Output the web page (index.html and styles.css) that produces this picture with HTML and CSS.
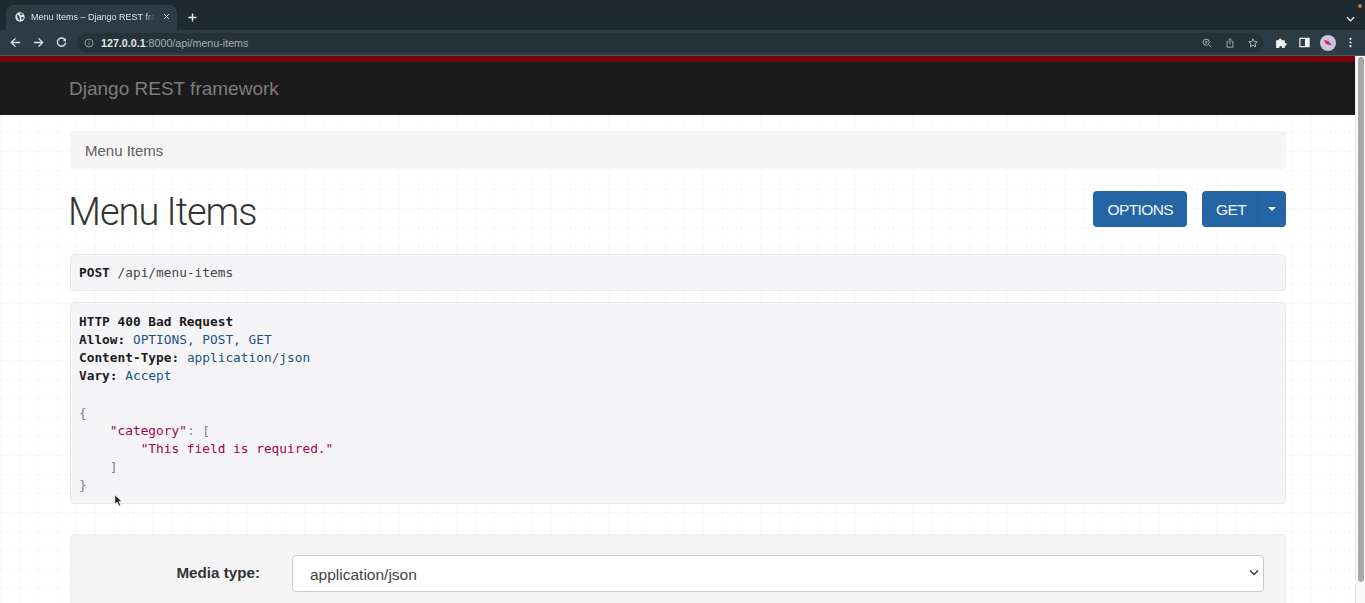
FILE: index.html
```html
<!DOCTYPE html>
<html lang="en">
<head>
<meta charset="utf-8">
<title>Menu Items – Django REST framework</title>
<link rel="stylesheet" href="styles.css">
</head>
<body>
<div class="chrome">
  <div class="tabstrip">
    <div class="tab">
      <svg class="favicon" viewBox="0 0 16 16"><circle cx="8" cy="8" r="7.500" fill="#e8eaed"/><path d="M3 4.500l3 .5 1.500 2-1 1.500 1.500 2v3L5 11 3.500 8zM9 1.500l3.500 1.500-1.500 2H9L8 3.500zM10 8h3.500l.5 1.500-2.500 3L10 11z" fill="#2f3e47"/></svg>
      <span class="tab-title">Menu Items – Django REST fra</span>
      <svg class="tab-close" viewBox="0 0 10 10"><path d="M1.500 1.500l7 7M8.500 1.500l-7 7" stroke="#dfe3e6" stroke-width="1.300"/></svg>
    </div>
    <svg class="newtab" viewBox="0 0 10 10"><path d="M5 .5v9M.5 5h9" stroke="#eef0f1" stroke-width="1.500"/></svg>
    <div class="strip-end">
      <svg class="chev" viewBox="0 0 10 6"><path d="M1 1l4 4 4-4" fill="none" stroke="#e8eaed" stroke-width="1.400"/></svg>
      <span class="notify-dot"></span>
    </div>
  </div>
  <div class="toolbar">
    <svg class="nav-icon" viewBox="0 0 12 12"><path d="M11 6H2M6 1.500L1.500 6 6 10.500" fill="none" stroke="#dfe3e6" stroke-width="1.500"/></svg>
    <svg class="nav-icon" viewBox="0 0 12 12"><path d="M1 6h9M6 1.500L10.500 6 6 10.500" fill="none" stroke="#dfe3e6" stroke-width="1.500"/></svg>
    <svg class="nav-icon" viewBox="0 0 12 12"><path d="M10 3.500A4.500 4.500 0 1 0 10.500 6" fill="none" stroke="#dfe3e6" stroke-width="1.500"/><path d="M10.800 1v3.500H7.300z" fill="#dfe3e6"/></svg>
    <div class="omnibox">
      <svg class="info" viewBox="0 0 12 12"><circle cx="6" cy="6" r="4.800" fill="none" stroke="#a9b1b6"/><path d="M6 5.500v3M6 3.500v1" stroke="#a9b1b6"/></svg>
      <span class="url"><b>127.0.0.1</b>:8000/api/menu-items</span>
      <div class="omni-icons">
        <svg class="omni-icon" viewBox="0 0 12 12"><circle cx="5" cy="5" r="3.700" fill="none" stroke="#aeb5b9" stroke-width="1.100"/><path d="M8 8l3 3M3.300 5h3.400M5 3.300v3.400" stroke="#aeb5b9" stroke-width="1.100"/></svg>
        <svg class="omni-icon" viewBox="0 0 12 12"><path d="M4 4H2.500v7h7V4H8M6 7.500V1M4.200 2.500L6 .8l1.800 1.700" fill="none" stroke="#aeb5b9" stroke-width="1.100"/></svg>
        <svg class="omni-icon" viewBox="0 0 12 12"><path d="M6 1l1.500 3.300 3.500.4-2.600 2.400.7 3.500L6 8.800l-3.100 1.800.7-3.500L1 4.700l3.500-.4z" fill="none" stroke="#c3c8cb" stroke-width="1.100"/></svg>
      </div>
    </div>
    <div class="tool-icons">
      <span class="slot"><svg class="puzzle" viewBox="0 0 12 12"><path d="M1 4h2.500a1.300 1.300 0 1 1 2.500 0h3v2.500a1.300 1.300 0 1 1 0 2.500V11H6.500a1.300 1.300 0 1 0-2.500 0H1z" fill="#f0f2f3"/></svg></span>
      <span class="slot"><svg class="tool-icon" viewBox="0 0 12 12"><path d="M1 1.500h10v9H1z" fill="none" stroke="#f0f2f3" stroke-width="1.300"/><path d="M6.500 1.500H11v9H6.500z" fill="#f0f2f3"/></svg></span>
      <span class="slot"><svg class="avatar" viewBox="0 0 16 16"><circle cx="8" cy="8" r="8" fill="#c9c6e2"/><path d="M4 5l4.500 1 3.500 4.500-6-1.500z" fill="#d9264f"/></svg></span>
      <span class="slot"><svg class="tool-icon" viewBox="0 0 12 12"><circle cx="6" cy="2" r="1.200" fill="#e8eaed"/><circle cx="6" cy="6" r="1.200" fill="#e8eaed"/><circle cx="6" cy="10" r="1.200" fill="#e8eaed"/></svg></span>
    </div>
  </div>
</div>
<div class="viewport">
  <div class="page">
    <header class="navbar"><div class="wrap"><a class="brand">Django REST framework</a></div></header>
    <main class="wrap content">
      <div class="breadcrumb">Menu Items</div>
      <div class="title-row">
        <h1>Menu Items</h1>
        <div class="actions">
          <button class="btn">OPTIONS</button>
          <div class="btn-group">
            <button class="btn btn-get">GET</button>
            <button class="btn btn-caret"><span class="caret"></span></button>
          </div>
        </div>
      </div>
      <pre class="request"><b>POST</b> /api/menu-items</pre>
      <pre class="response"><b>HTTP 400 Bad Request</b>
<b>Allow:</b> <span class="hv">OPTIONS, POST, GET</span>
<b>Content-Type:</b> <span class="hv">application/json</span>
<b>Vary:</b> <span class="hv">Accept</span>

<span class="pun">{</span>
    <span class="str">"category"</span><span class="pun">: [</span>
        <span class="str">"This field is required."</span>
    <span class="pun">]</span>
<span class="pun">}</span></pre>
      <form class="well">
        <label class="lbl">Media type:</label>
        <div class="select">application/json
          <svg class="select-chev" viewBox="0 0 10 6"><path d="M1 1l4 4 4-4" fill="none" stroke="#3a3a3a" stroke-width="1.500"/></svg>
        </div>
      </form>
    </main>
    <svg class="cursor" viewBox="0 0 10 14"><path d="M1 1v10l2.500-2.300L5.500 13l1.800-.8-2-4.200H8.500z" fill="#1a1a1a" stroke="#fff" stroke-width=".6"/></svg>
  </div>
  <div class="scrollbar"><div class="thumb"></div></div>
</div>
</body>
</html>
```
FILE: styles.css
```css
* { box-sizing: border-box; }
html, body { margin: 0; height: 100%; overflow: hidden; }
body { font-family: "Liberation Sans", Arial, sans-serif; background: #fff; display: flex; flex-direction: column; }

.chrome { flex: none; height: 56px; }
.tabstrip { height: 30px; background: #1f2a30; display: flex; align-items: flex-end; padding-left: 6px; }
.tab { width: 171px; height: 25px; background: #2d3b44; border-radius: 7px 7px 0 0; display: flex; align-items: center; padding: 0 6px 2px 9px; }
.favicon { width: 10px; height: 10px; flex: none; }
.tab-title { font-size: 9px; color: #dfe3e6; margin-left: 6px; white-space: nowrap; width: 124px; flex: none; -webkit-mask-image: linear-gradient(90deg, #000 92%, transparent); mask-image: linear-gradient(90deg, #000 92%, transparent); }
.tab-close { width: 7px; height: 7px; margin-left: 8px; flex: none; }
.newtab { width: 9px; height: 9px; margin: 0 0 8px 11px; }
.strip-end { margin-left: auto; width: 24px; height: 30px; display: flex; align-items: flex-end; position: relative; padding: 0 0 8px 5px; }
.chev { width: 9px; height: 6px; }
.notify-dot { position: absolute; top: 4px; right: 3px; width: 4px; height: 4px; border-radius: 50%; background: #c8782c; }

.toolbar { height: 26px; background: #2d3b44; display: flex; align-items: center; padding-left: 10px; border-bottom: 1px solid #4a565d; }
.nav-icon { width: 11px; height: 11px; flex: none; margin-right: 12px; }
.omnibox { width: 1187px; height: 20px; background: #25323a; border-radius: 10px; display: flex; align-items: center; padding-left: 7px; margin-left: -2px; flex: none; }
.info { width: 10px; height: 10px; flex: none; }
.url { font-size: 10.700px; color: #a6aeb3; margin-left: 7px; }
.url b { color: #e4e7e9; font-weight: 700; }
.omni-icons { margin-left: auto; display: flex; gap: 13px; padding-right: 6px; }
.omni-icon { width: 10px; height: 10px; }
.tool-icons { display: flex; align-items: center; margin-left: 6px; }
.slot { width: 23px; display: flex; justify-content: center; align-items: center; flex: none; }
.tool-icon { width: 11px; height: 11px; }
.puzzle { width: 13px; height: 13px; }
.avatar { width: 16px; height: 16px; }

.viewport { flex: 1; min-height: 0; display: flex; }
.page {
  flex: 1; min-width: 0; overflow: hidden; position: relative;
  background-color: #fff;
  background-image: linear-gradient(#f9f9f9 1px, transparent 1px), linear-gradient(90deg, #f9f9f9 1px, transparent 1px);
  background-size: 19px 19px;
}
.scrollbar { width: 10px; flex: none; background: #fafafa; border-left: 1px solid #e6e6e6; padding: 1px 1px 0 2px; }
.thumb { height: 525px; background: #a8a8a8; border-radius: 4px; }

.navbar { height: 59px; background: #1b1b1b; border-top: 6px solid #74050f; display: flex; align-items: center; }
.wrap { width: 1216px; margin-left: 70px; }
.brand { font-size: 19px; color: #7d7d7d; margin-left: -1px; }

.content { padding-top: 16px; }
.breadcrumb { height: 38px; background: #f5f5f5; border-radius: 4px; padding: 0 0 0 15px; display: flex; align-items: center; font-size: 15px; color: #5f5f5f; }
.title-row { display: flex; justify-content: space-between; align-items: center; height: 74px; margin-top: 3px; margin-bottom: 8px; }
h1 { margin: 6px 0 0 -2px; font-family: Roboto, "Liberation Sans", sans-serif; font-weight: 300; font-size: 38px; letter-spacing: -1px; color: #333; }
.actions { display: flex; gap: 15px; }
.btn { height: 36px; border: 0; background: #2465a5; color: #f1f5f8; font-family: "Liberation Sans", Arial, sans-serif; font-size: 15.500px; border-radius: 4px; padding: 1px 14px 0; letter-spacing: -.6px; }
.btn-group { display: flex; }
.btn-get { border-radius: 4px 0 0 4px; width: 56px; border-right: 1px solid #215d98; text-align: left; }
.btn-caret { border-radius: 0 4px 4px 0; width: 28px; padding: 0; display: flex; align-items: center; justify-content: center; }
.caret { width: 0; height: 0; border-left: 4px solid transparent; border-right: 4px solid transparent; border-top: 4px solid #f1f5f8; }

pre { margin: 0; font-family: "DejaVu Sans Mono", monospace; font-size: 12.800px; line-height: 18.200px; background: #f5f5f8; border: 1px solid #e9e9ec; border-radius: 4px; color: #333; padding: 9.500px 8px 8px; }
pre b { color: #1a1a1a; }
.request { height: 37px; margin-bottom: 11px; color: #444; padding-top: 8.500px; }
.response { height: 202px; }
.hv { color: #1e5383; }
.str { color: #a5004b; }
.pun { color: #808080; }

.well { margin-top: 30px; height: 100px; background: #f5f5f5; border: 1px solid #eeeeee; border-radius: 4px; display: flex; padding: 20px 21px 0 0; align-items: flex-start; }
.lbl { width: 189px; text-align: right; font-size: 15.200px; font-weight: 700; color: #333; line-height: 36px; flex: none; }
.select { flex: 1; margin-left: 32px; height: 37px; background: #fff; border: 1px solid #ccc; border-radius: 4px; padding: 1px 0 0 17px; font-size: 15.500px; line-height: 36px; color: #444; position: relative; }
.select-chev { position: absolute; right: 4px; top: 13px; width: 10px; height: 7px; }

.cursor { position: absolute; left: 114px; top: 438px; width: 9px; height: 13px; }
```
